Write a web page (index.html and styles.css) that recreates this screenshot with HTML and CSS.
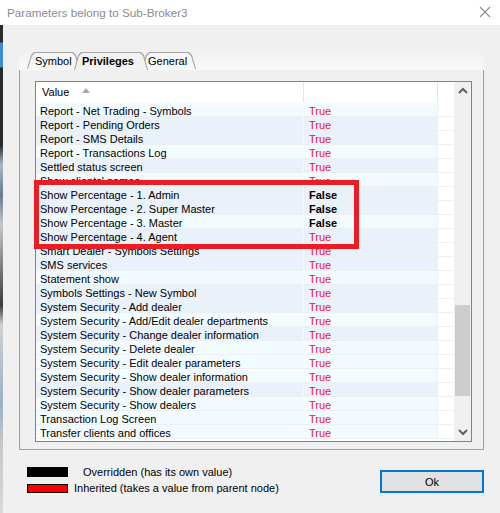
FILE: index.html
```html
<!DOCTYPE html>
<html>
<head>
<meta charset="utf-8">
<link rel="stylesheet" href="styles.css">
</head>
<body>
<div class="titlebar">
  <span class="title">Parameters belong to Sub-Broker3</span>
  <svg class="close" width="12" height="12" viewBox="0 0 12 12"><path d="M1 1 L11 11 M11 1 L1 11" stroke="#8a8a8a" stroke-width="1.1" fill="none"/></svg>
</div>
<div class="frame">
  <div class="edge"></div>
  <div class="client">
    <div class="tabs">
      <div class="tab t-symbol">Symbol</div>
      <div class="tab t-priv selected">Privileges</div>
      <div class="tab t-general">General</div>
    </div>
    <div class="panel">
      <div class="list">
        <div class="grid">
          <div class="head">
            <div class="hcell h1">Value <span class="sort"></span></div>
            <div class="hcell h2"></div>
            <div class="hcell h3"></div>
          </div>
          <div class="rows">
            <div class="row l"><div class="c1">Report - Net Trading - Symbols</div><div class="c2 t">True</div><div class="c3"></div></div>
            <div class="row b"><div class="c1">Report - Pending Orders</div><div class="c2 t">True</div><div class="c3"></div></div>
            <div class="row b"><div class="c1">Report - SMS Details</div><div class="c2 t">True</div><div class="c3"></div></div>
            <div class="row l"><div class="c1">Report - Transactions Log</div><div class="c2 t">True</div><div class="c3"></div></div>
            <div class="row b"><div class="c1">Settled status screen</div><div class="c2 t">True</div><div class="c3"></div></div>
            <div class="row l"><div class="c1">Show clients' names</div><div class="c2 t">True</div><div class="c3"></div></div>
            <div class="row b"><div class="c1">Show Percentage - 1. Admin</div><div class="c2 f">False</div><div class="c3"></div></div>
            <div class="row b"><div class="c1">Show Percentage - 2. Super Master</div><div class="c2 f">False</div><div class="c3"></div></div>
            <div class="row l"><div class="c1">Show Percentage - 3. Master</div><div class="c2 f">False</div><div class="c3"></div></div>
            <div class="row b"><div class="c1">Show Percentage - 4. Agent</div><div class="c2 t">True</div><div class="c3"></div></div>
            <div class="row b"><div class="c1">Smart Dealer - Symbols Settings</div><div class="c2 t">True</div><div class="c3"></div></div>
            <div class="row b"><div class="c1">SMS services</div><div class="c2 t">True</div><div class="c3"></div></div>
            <div class="row l"><div class="c1">Statement show</div><div class="c2 t">True</div><div class="c3"></div></div>
            <div class="row b"><div class="c1">Symbols Settings - New Symbol</div><div class="c2 t">True</div><div class="c3"></div></div>
            <div class="row b"><div class="c1">System Security - Add dealer</div><div class="c2 t">True</div><div class="c3"></div></div>
            <div class="row l"><div class="c1">System Security - Add/Edit dealer departments</div><div class="c2 t">True</div><div class="c3"></div></div>
            <div class="row b"><div class="c1">System Security - Change dealer information</div><div class="c2 t">True</div><div class="c3"></div></div>
            <div class="row l"><div class="c1">System Security - Delete dealer</div><div class="c2 t">True</div><div class="c3"></div></div>
            <div class="row l"><div class="c1">System Security - Edit dealer parameters</div><div class="c2 t">True</div><div class="c3"></div></div>
            <div class="row l"><div class="c1">System Security - Show dealer information</div><div class="c2 t">True</div><div class="c3"></div></div>
            <div class="row b"><div class="c1">System Security - Show dealer parameters</div><div class="c2 t">True</div><div class="c3"></div></div>
            <div class="row l"><div class="c1">System Security - Show dealers</div><div class="c2 t">True</div><div class="c3"></div></div>
            <div class="row l"><div class="c1">Transaction Log Screen</div><div class="c2 t">True</div><div class="c3"></div></div>
            <div class="row l"><div class="c1">Transfer clients and offices</div><div class="c2 t">True</div><div class="c3"></div></div>
          </div>
        </div>
        <div class="scrollbar">
          <div class="sb-btn"><svg width="10" height="7" viewBox="0 0 10 7"><path d="M1 6 L5 2 L9 6" stroke="#606060" stroke-width="2" fill="none"/></svg></div>
          <div class="sb-track"><div class="thumb"></div></div>
          <div class="sb-btn"><svg width="10" height="7" viewBox="0 0 10 7"><path d="M1 1 L5 5 L9 1" stroke="#606060" stroke-width="2" fill="none"/></svg></div>
        </div>
        <div class="highlight"></div>
      </div>
    </div>
    <div class="footer">
      <div class="legend">
        <div class="item"><span class="swatch black"></span><span class="lbl l1">Overridden (has its own value)</span></div>
        <div class="item"><span class="swatch red"></span><span class="lbl l2">Inherited (takes a value from parent node)</span></div>
      </div>
      <button class="ok">Ok</button>
    </div>
  </div>
</div>
</body>
</html>
```

FILE: styles.css
```css
html, body {
  margin: 0;
  padding: 0;
}
body {
  width: 500px;
  height: 513px;
  overflow: hidden;
  background: #f0f0f0;
  font-family: "Liberation Sans", Arial, sans-serif;
  font-size: 11px;
  color: #000;
}
.titlebar {
  height: 25px;
  background: #fff;
  display: flex;
  align-items: center;
  justify-content: space-between;
  padding: 0 9px 0 7px;
  box-sizing: border-box;
}
.title {
  font-size: 11.7px;
  color: #8c8c8c;
  margin-top: -1px;
}
.close {
  display: block;
  margin-top: -2px;
}
.frame {
  display: flex;
  height: 488px;
}
.edge {
  width: 3px;
  flex: none;
  background: linear-gradient(to bottom, #2b2b2b 0, #2b2b2b 17px, #3d8ad6 18px, #3d8ad6 42px, #2a2a2a 43px, #2a2a2a 120px, #a8b8c8 140px, #6a7a90 170px, #c8c8c8 200px, #3a3a3a 280px, #d0d0d0 300px, #9ab0c8 380px, #c8c8c8 420px, #d8d8d8 488px);
}
.client {
  flex: 1;
  padding-left: 16px;
}
.tabs {
  position: relative;
  z-index: 2;
  width: 465px;
  height: 20px;
  margin-top: 25px;
  margin-bottom: -1px;
  display: flex;
  align-items: flex-end;
  padding-left: 8px;
  box-sizing: border-box;
  background: linear-gradient(to bottom, #f0f0f0, #f9f9f9);
}
.tab {
  position: relative;
  height: 17px;
  margin-bottom: 1px;
  line-height: 18px;
  box-sizing: border-box;
  padding: 0 8px;
  white-space: nowrap;
  z-index: 1;
}
.tab::before,
.tab::after {
  content: "";
  position: absolute;
  inset: 0;
  z-index: -1;
}
.tab::before {
  background: #a6a6a6;
  clip-path: polygon(0 100%, 4px 3px, 7px 0, calc(100% - 7px) 0, calc(100% - 4px) 3px, 100% 100%);
}
.tab::after {
  background: #f6f6f6;
  clip-path: polygon(1px 100%, 5px 4px, 8px 1px, calc(100% - 8px) 1px, calc(100% - 5px) 4px, calc(100% - 1px) 100%);
}
.t-symbol {
  width: 53px;
}
.t-priv {
  width: 74px;
  margin-left: -6px;
  font-weight: bold;
}
.t-general {
  width: 54px;
  margin-left: -6px;
  padding-left: 6px;
  z-index: 0;
}
.tab.selected {
  height: 18px;
  margin-bottom: 0;
  line-height: 18px;
  z-index: 3;
}
.tab.selected::after {
  background: #f2f2f2;
}
.panel {
  position: relative;
  z-index: 1;
  width: 465px;
  height: 381px;
  box-sizing: border-box;
  border: 1px solid #a0a0a0;
  background: #f0f0f0;
  padding: 11px 0 0 15px;
}
.list {
  position: relative;
  width: 437px;
  height: 361px;
  box-sizing: border-box;
  border: 1px solid #828282;
  background: #fff;
  display: flex;
}
.grid {
  width: 418px;
  flex: none;
}
.head {
  display: grid;
  grid-template-columns: 268px 134px 16px;
  height: 20px;
  margin-bottom: 1px;
}
.hcell {
  box-sizing: border-box;
  height: 20px;
  line-height: 20px;
  border-right: 1px solid #e5e5e5;
}
.h1 {
  padding-left: 6px;
  display: flex;
  align-items: center;
}
.h3 {
  border-right: none;
}
.sort {
  display: inline-block;
  width: 0;
  height: 0;
  margin-left: 13px;
  margin-top: -3px;
  border-left: 4.5px solid transparent;
  border-right: 4.5px solid transparent;
  border-bottom: 5px solid #a9a9a3;
}
.row {
  display: grid;
  grid-template-columns: 268px 134px 16px;
  height: 14px;
}
.row > div {
  box-sizing: border-box;
  height: 14px;
  line-height: 16px;
  border-bottom: 1px solid #edf0f3;
  white-space: nowrap;
}
.c1 {
  padding-left: 4px;
  border-right: 1px solid #f7f9fb;
}
.c2 {
  padding-left: 5px;
  border-right: 1px solid #eeeeee;
}
.c3 {
  background: #fff;
}
.row.l .c1,
.row.l .c2 {
  background: #f2fbfe;
}
.row.b .c1,
.row.b .c2 {
  background: #e9f1fb;
}
.t {
  color: #f01038;
}
.f {
  font-weight: bold;
  color: #000;
}
.scrollbar {
  width: 17px;
  flex: none;
  background: #f0f0f0;
  display: flex;
  flex-direction: column;
}
.sb-btn {
  height: 17px;
  display: flex;
  align-items: center;
  justify-content: center;
}
.sb-track {
  flex: 1;
}
.thumb {
  margin: 206px 1px 0 1px;
  height: 91px;
  background: #cdcdcd;
}
.highlight {
  position: absolute;
  left: -2px;
  top: 98px;
  width: 325px;
  height: 69px;
  box-sizing: border-box;
  border: 5px solid #ec1c24;
}
.footer {
  width: 465px;
  display: flex;
  justify-content: space-between;
  align-items: flex-start;
  margin-top: 14px;
  padding-left: 8px;
  box-sizing: border-box;
}
.legend {
  display: flex;
  flex-direction: column;
}
.item {
  display: flex;
  align-items: center;
  height: 16px;
}
.swatch {
  display: block;
  width: 41px;
  box-sizing: border-box;
}
.swatch.black {
  height: 10px;
  background: #000;
}
.swatch.red {
  height: 9px;
  background: #ff0000;
  border: 1px solid #000;
}
.l1 {
  margin-left: 15px;
}
.l2 {
  margin-left: 6px;
}
.ok {
  margin-top: 6px;
  width: 104px;
  height: 23px;
  box-sizing: border-box;
  border: 2px solid #0078d7;
  background: #e1e1e1;
  font-family: "Liberation Sans", Arial, sans-serif;
  font-size: 11px;
  color: #000;
  padding: 0;
}
```
